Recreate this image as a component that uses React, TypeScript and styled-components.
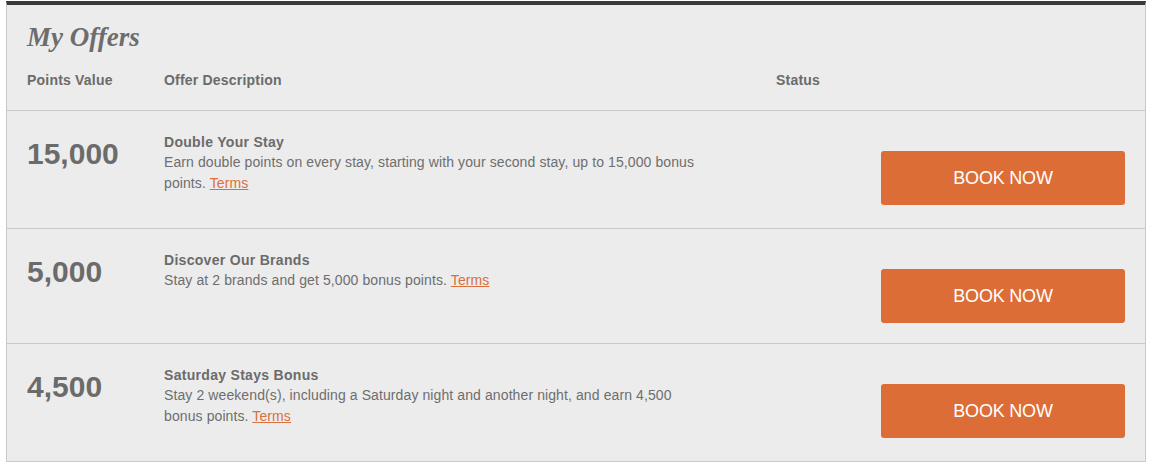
import styled, { createGlobalStyle } from "styled-components";

const GlobalStyle = createGlobalStyle`
  body {
    margin: 0;
    background: #ffffff;
    font-family: "Liberation Sans", Arial, sans-serif;
  }
`;

const Page = styled.div`
  padding: 1px 5px 5px 6px;
`;

const Panel = styled.section`
  background: #ececec;
  border-top: 4px solid #3a3a3a;
  border-left: 1px solid #c9c9c9;
  border-right: 1px solid #c9c9c9;
  border-bottom: 1px solid #c9c9c9;
  color: #6b6b6b;
`;

const Heading = styled.h2`
  margin: 0;
  padding: 17px 20px 0;
  font-family: "Liberation Serif", Georgia, serif;
  font-style: italic;
  font-weight: bold;
  font-size: 27px;
  line-height: 30px;
  color: #6d6d6d;
`;

const Columns = "137px 612px 1fr";

const HeadRow = styled.div`
  display: grid;
  grid-template-columns: ${Columns};
  padding: 20px 20px 22px;
  font-size: 14px;
  font-weight: bold;
  line-height: 16px;
  letter-spacing: 0.2px;
  color: #6b6b6b;
  border-bottom: 1px solid #c9c9c9;
`;

const OfferRow = styled.div<{ $lines: number; $last?: boolean }>`
  display: grid;
  grid-template-columns: ${Columns} 244px;
  padding: 23px 20px ${(p) => 20 + (p.$lines - 1) * 3}px;
  border-bottom: ${(p) => (p.$last ? "none" : "1px solid #c9c9c9")};
`;

const Points = styled.div`
  font-size: 30px;
  font-weight: bold;
  line-height: 40px;
  color: #6b6b6b;
`;

const Details = styled.div`
  max-width: 542px;
`;

const Title = styled.div`
  font-size: 14px;
  font-weight: bold;
  line-height: 17px;
  letter-spacing: 0.3px;
  color: #6b6b6b;
`;

const Description = styled.p`
  margin: 1px 0 0;
  font-size: 14px;
  line-height: 21px;
  letter-spacing: 0.1px;
  color: #6e6e6e;
`;

const TermsLink = styled.a`
  color: #d9703e;
  text-decoration: underline;
  cursor: pointer;
`;

const Status = styled.div``;

const BookButton = styled.button`
  align-self: start;
  margin-top: 17px;
  width: 244px;
  height: 54px;
  border: none;
  border-radius: 3px;
  background: #dc6d37;
  color: #ffffff;
  font-family: "Liberation Sans", Arial, sans-serif;
  font-size: 18px;
  letter-spacing: -0.2px;
  cursor: pointer;
`;

type Offer = {
  points: string;
  title: string;
  text: string;
  lines: number;
};

const offers: Offer[] = [
  {
    points: "15,000",
    title: "Double Your Stay",
    text: "Earn double points on every stay, starting with your second stay, up to 15,000 bonus points.",
    lines: 2,
  },
  {
    points: "5,000",
    title: "Discover Our Brands",
    text: "Stay at 2 brands and get 5,000 bonus points.",
    lines: 1,
  },
  {
    points: "4,500",
    title: "Saturday Stays Bonus",
    text: "Stay 2 weekend(s), including a Saturday night and another night, and earn 4,500 bonus points.",
    lines: 2,
  },
];

export default function App() {
  return (
    <>
      <GlobalStyle />
      <Page>
        <Panel>
          <Heading>My Offers</Heading>
          <HeadRow>
            <span>Points Value</span>
            <span>Offer Description</span>
            <span>Status</span>
          </HeadRow>
          {offers.map((offer, i) => (
            <OfferRow
              key={offer.title}
              $lines={offer.lines}
              $last={i === offers.length - 1}
            >
              <Points>{offer.points}</Points>
              <Details>
                <Title>{offer.title}</Title>
                <Description>
                  {offer.text} <TermsLink>Terms</TermsLink>
                </Description>
              </Details>
              <Status />
              <BookButton>BOOK NOW</BookButton>
            </OfferRow>
          ))}
        </Panel>
      </Page>
    </>
  );
}
